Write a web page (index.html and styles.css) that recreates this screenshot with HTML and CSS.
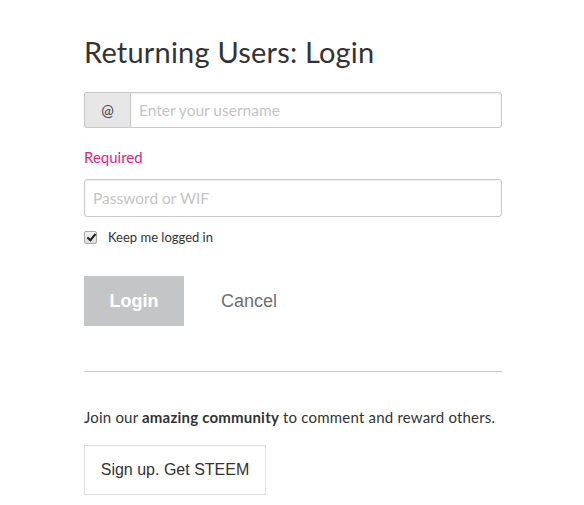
FILE: index.html
```html
<!DOCTYPE html>
<html>
<head>
<meta charset="utf-8">
<link rel="stylesheet" href="styles.css">
</head>
<body>
<div class="login">
  <h1 class="title">Returning Users: Login</h1>
  <div class="group">
    <span class="addon">@</span>
    <input class="field" type="text" placeholder="Enter your username">
  </div>
  <div class="error">Required</div>
  <input class="field pass" type="password" placeholder="Password or WIF">
  <label class="keep"><input class="check" type="checkbox" checked> <span>Keep me logged in</span></label>
  <div class="actions">
    <button class="btn-login">Login</button>
    <button class="btn-cancel">Cancel</button>
  </div>
  <hr class="rule">
  <p class="join">Join our <strong>amazing community</strong> to comment and reward others.</p>
  <button class="btn-signup">Sign up. Get STEEM</button>
</div>
</body>
</html>
```
FILE: styles.css
```css
* { box-sizing: border-box; }
body {
  margin: 0;
  background: #fff;
  font-family: "Source Sans Pro", Lato, "Liberation Sans", sans-serif;
  color: #333;
}
.login {
  width: 418px;
  margin-left: 84px;
  padding-top: 32px;
}
.title {
  margin: 0;
  font-size: 29px;
  font-weight: 400;
  line-height: 40px;
  letter-spacing: 0.2px;
  color: #333;
}
.group {
  display: flex;
  margin-top: 20px;
  height: 36px;
}
.addon {
  width: 46px;
  flex: none;
  background: #e6e6e6;
  border: 1px solid #cacaca;
  border-right: none;
  border-radius: 3px 0 0 3px;
  display: flex;
  align-items: center;
  justify-content: center;
  font-size: 15px;
  color: #444;
}
.field {
  flex: 1;
  display: block;
  width: 100%;
  height: 36px;
  border: 1px solid #cacaca;
  border-radius: 0 3px 3px 0;
  padding: 0 8px;
  font-family: inherit;
  font-size: 15.5px;
  color: #333;
  outline: none;
  box-shadow: inset 0 1px 2px rgba(10,10,10,0.08);
}
.field::placeholder { color: #c4c4c4; }
.error {
  margin-top: 19px;
  font-size: 15px;
  line-height: 20px;
  color: #e2267c;
}
.pass {
  margin-top: 12px;
  height: 38px;
  border-radius: 3px;
}
.keep {
  display: flex;
  align-items: center;
  margin-top: 12px;
  font-size: 13px;
  color: #333;
  height: 16px;
}
.check {
  appearance: none;
  -webkit-appearance: none;
  margin: 0 11px 0 0;
  width: 13px;
  height: 13px;
  border: 1px solid #a9a9a9;
  border-radius: 2px;
  background: linear-gradient(#f2f2f2, #dcdcdc);
  position: relative;
}
.check:checked::after {
  content: "";
  position: absolute;
  left: 3.5px;
  top: 0.5px;
  width: 3px;
  height: 7px;
  border: solid #222;
  border-width: 0 2px 2px 0;
  transform: rotate(40deg);
}
.actions {
  display: flex;
  align-items: center;
  margin-top: 31px;
}
.btn-login {
  width: 100px;
  height: 50px;
  border: none;
  background: #c4c5c7;
  color: #fff;
  font-family: Arial, "Liberation Sans", sans-serif;
  font-size: 18px;
  font-weight: 700;
  padding: 0;
}
.btn-cancel {
  margin-left: 25px;
  border: none;
  background: none;
  color: #6b7077;
  font-family: Arial, "Liberation Sans", sans-serif;
  font-size: 18px;
  padding: 0 12px;
}
.rule {
  margin: 45px 0 0 0;
  border: none;
  border-top: 1px solid #cacaca;
}
.join {
  margin: 34px 0 0 0;
  font-size: 15px;
  line-height: 22px;
  letter-spacing: 0.2px;
  white-space: nowrap;
}
.join strong { font-weight: 700; }
.btn-signup {
  margin-top: 17px;
  width: 182px;
  height: 50px;
  background: #fff;
  border: 1px solid #dcdcdc;
  font-family: Arial, "Liberation Sans", sans-serif;
  font-size: 16px;
  color: #333;
  padding: 0;
}
```
